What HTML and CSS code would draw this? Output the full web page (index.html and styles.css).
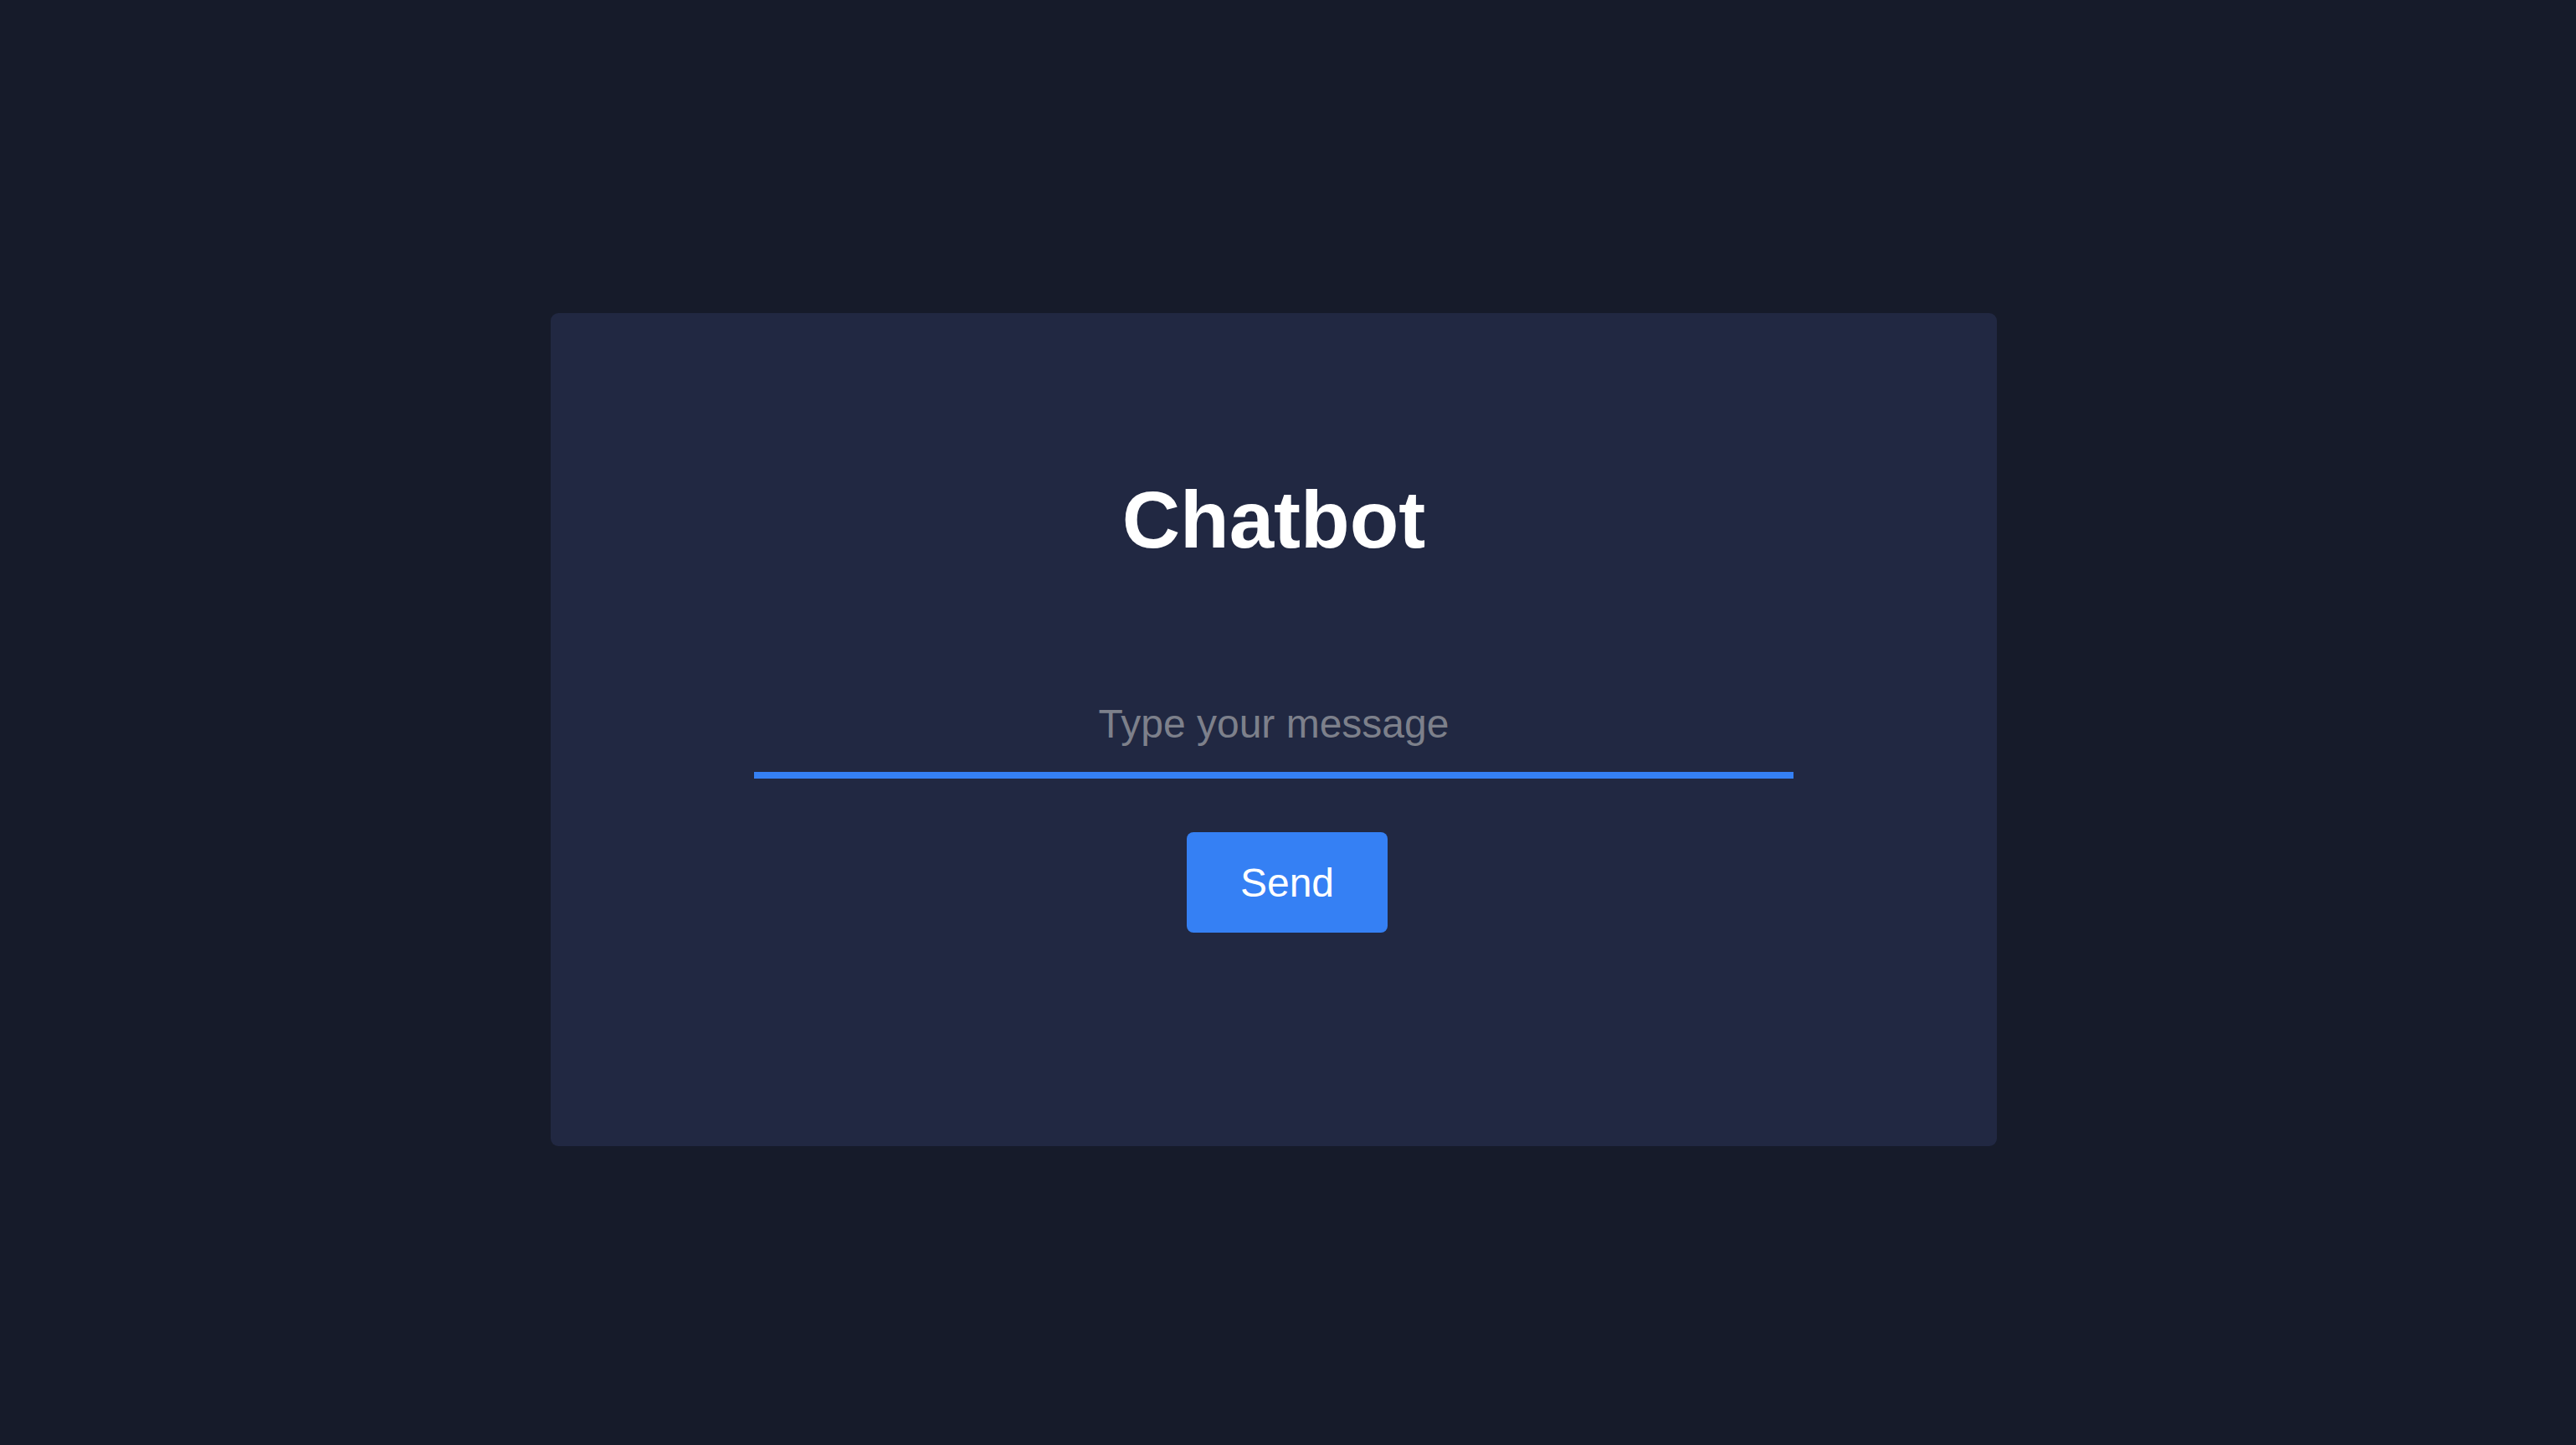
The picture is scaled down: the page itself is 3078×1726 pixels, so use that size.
FILE: index.html
```html
<!DOCTYPE html>
<html lang="en">
<head>
<meta charset="utf-8">
<title>Chatbot</title>
<link rel="stylesheet" href="styles.css">
</head>
<body>
  <main class="card">
    <h1 class="title">Chatbot</h1>
    <input class="message" type="text" placeholder="Type your message">
    <button class="send" type="button">Send</button>
  </main>
</body>
</html>
```
FILE: styles.css
```css
html, body {
  margin: 0;
  padding: 0;
}
body {
  background: #161b2a;
  font-family: "Liberation Sans", Arial, Helvetica, sans-serif;
  min-height: 1726px;
  padding-top: 374px;
  box-sizing: border-box;
}
.card {
  margin-left: 658px;
  width: 1728px;
  box-sizing: border-box;
  background: #212842;
  border-radius: 9px;
  padding: 192px 243px 255px;
  display: flex;
  flex-direction: column;
  align-items: center;
}
.title {
  margin: 0;
  color: #ffffff;
  font-size: 96px;
  font-weight: 700;
  line-height: 110px;
}
.message {
  margin-top: 127px;
  width: 100%;
  box-sizing: border-box;
  background: transparent;
  border: none;
  border-bottom: 8px solid #3580f4;
  padding: 31px 0 28px;
  font-family: inherit;
  font-size: 48px;
  line-height: 60px;
  height: 127px;
  color: #ffffff;
  text-align: center;
  outline: none;
}
.message::placeholder {
  color: #7d808b;
}
.send {
  margin-top: 64px;
  margin-left: 32px;
  width: 240px;
  height: 120px;
  background: #3580f4;
  color: #ffffff;
  border: none;
  border-radius: 8px;
  font-family: inherit;
  font-size: 48px;
  padding: 0;
  display: flex;
  align-items: center;
  justify-content: center;
}
```
